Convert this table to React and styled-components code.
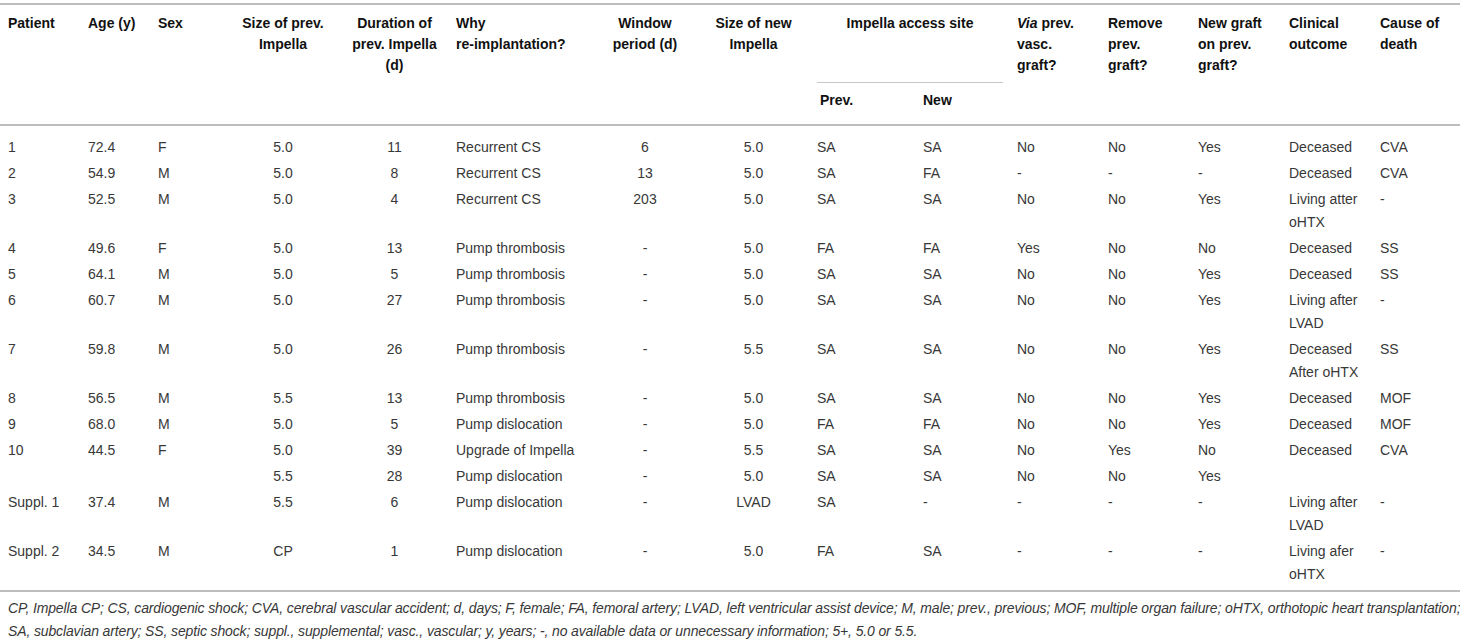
import React from "react";
import styled, { createGlobalStyle } from "styled-components";

const GlobalStyle = createGlobalStyle`
  body {
    margin: 0;
    background: #fff;
    font-family: "Liberation Sans", Arial, Helvetica, sans-serif;
    color: #333;
  }
`;

const widths = [83, 70, 75, 110, 113, 144, 100, 117, 106, 94, 91, 90, 91, 91, 85];
const centered = [3, 4, 6, 7];

const rows = [
  ["1", "72.4", "F", "5.0", "11", "Recurrent CS", "6", "5.0", "SA", "SA", "No", "No", "Yes", "Deceased", "CVA"],
  ["2", "54.9", "M", "5.0", "8", "Recurrent CS", "13", "5.0", "SA", "FA", "-", "-", "-", "Deceased", "CVA"],
  ["3", "52.5", "M", "5.0", "4", "Recurrent CS", "203", "5.0", "SA", "SA", "No", "No", "Yes", ["Living atter", "oHTX"], "-"],
  ["4", "49.6", "F", "5.0", "13", "Pump thrombosis", "-", "5.0", "FA", "FA", "Yes", "No", "No", "Deceased", "SS"],
  ["5", "64.1", "M", "5.0", "5", "Pump thrombosis", "-", "5.0", "SA", "SA", "No", "No", "Yes", "Deceased", "SS"],
  ["6", "60.7", "M", "5.0", "27", "Pump thrombosis", "-", "5.0", "SA", "SA", "No", "No", "Yes", ["Living after", "LVAD"], "-"],
  ["7", "59.8", "M", "5.0", "26", "Pump thrombosis", "-", "5.5", "SA", "SA", "No", "No", "Yes", ["Deceased", "After oHTX"], "SS"],
  ["8", "56.5", "M", "5.5", "13", "Pump thrombosis", "-", "5.0", "SA", "SA", "No", "No", "Yes", "Deceased", "MOF"],
  ["9", "68.0", "M", "5.0", "5", "Pump dislocation", "-", "5.0", "FA", "FA", "No", "No", "Yes", "Deceased", "MOF"],
  ["10", "44.5", "F", "5.0", "39", "Upgrade of Impella", "-", "5.5", "SA", "SA", "No", "Yes", "No", "Deceased", "CVA"],
  ["", "", "", "5.5", "28", "Pump dislocation", "-", "5.0", "SA", "SA", "No", "No", "Yes", "", ""],
  ["Suppl. 1", "37.4", "M", "5.5", "6", "Pump dislocation", "-", "LVAD", "SA", "-", "-", "-", "-", ["Living after", "LVAD"], "-"],
  ["Suppl. 2", "34.5", "M", "CP", "1", "Pump dislocation", "-", "5.0", "FA", "SA", "-", "-", "-", ["Living afer", "oHTX"], "-"],
];

const Page = styled.div`
  width: 1460px;
  padding-top: 3px;
`;

const Table = styled.table`
  width: 1460px;
  border-collapse: collapse;
  table-layout: fixed;
  border-top: 2px solid #bdbdbd;
  border-bottom: 2px solid #bdbdbd;
`;

const HeadRow = styled.tr`
  &:last-child th {
    border-bottom: 2px solid #bdbdbd;
  }
`;

const HeadCell = styled.th`
  padding: ${(p) => (p.$sub ? "7px 5px 0" : "8px 5px 0")};
  height: ${(p) => (p.$sub ? "34px" : "auto")};
  vertical-align: top;
  text-align: ${(p) => (p.$center ? "center" : "left")};
  font-size: 14px;
  font-weight: bold;
  line-height: 21px;
  color: #111;
  white-space: nowrap;
  border-bottom: ${(p) => (p.$span ? "2px solid #bdbdbd" : "none")};
  &:first-child {
    padding-left: 8px;
  }
`;

const GroupCell = styled.th`
  padding: 8px 9px 0 5px;
  vertical-align: top;
`;

const GroupLabel = styled.div`
  height: 69px;
  border-bottom: 1px solid #c8c8c8;
  text-align: center;
  font-size: 14px;
  font-weight: bold;
  line-height: 21px;
  color: #111;
  white-space: nowrap;
`;

const BodyRow = styled.tr`
  &:first-child td {
    padding-top: 10px;
  }
  &:last-child td {
    padding-bottom: 4px;
  }
`;

const Cell = styled.td`
  padding: 1px 5px 2px;
  vertical-align: top;
  text-align: ${(p) => (p.$center ? "center" : "left")};
  font-size: 14px;
  line-height: 23px;
  color: #383838;
  white-space: nowrap;
  &:first-child {
    padding-left: 8px;
  }
`;

const Footnote = styled.p`
  margin: 0;
  padding: 5px 8px 0;
  font-size: 14px;
  line-height: 23px;
  font-style: italic;
  color: #383838;
  letter-spacing: -0.13px;
  white-space: nowrap;
`;

const lines = (v) =>
  Array.isArray(v)
    ? v.map((t, i) => (
        <React.Fragment key={i}>
          {i > 0 && <br />}
          {t}
        </React.Fragment>
      ))
    : v;

export default function App() {
  return (
    <Page>
      <GlobalStyle />
      <Table>
        <colgroup>
          {widths.map((w, i) => (
            <col key={i} style={{ width: w }} />
          ))}
        </colgroup>
        <thead>
          <HeadRow>
            <HeadCell rowSpan={2} $span>Patient</HeadCell>
            <HeadCell rowSpan={2} $span>Age (y)</HeadCell>
            <HeadCell rowSpan={2} $span>Sex</HeadCell>
            <HeadCell rowSpan={2} $span $center>Size of prev.<br />Impella</HeadCell>
            <HeadCell rowSpan={2} $span $center>Duration of<br />prev. Impella<br />(d)</HeadCell>
            <HeadCell rowSpan={2} $span>Why<br />re-implantation?</HeadCell>
            <HeadCell rowSpan={2} $span $center>Window<br />period (d)</HeadCell>
            <HeadCell rowSpan={2} $span $center>Size of new<br />Impella</HeadCell>
            <GroupCell colSpan={2}>
              <GroupLabel>Impella access site</GroupLabel>
            </GroupCell>
            <HeadCell rowSpan={2} $span><i>Via</i> prev.<br />vasc.<br />graft?</HeadCell>
            <HeadCell rowSpan={2} $span>Remove<br />prev.<br />graft?</HeadCell>
            <HeadCell rowSpan={2} $span>New graft<br />on prev.<br />graft?</HeadCell>
            <HeadCell rowSpan={2} $span>Clinical<br />outcome</HeadCell>
            <HeadCell rowSpan={2} $span>Cause of<br />death</HeadCell>
          </HeadRow>
          <HeadRow>
            <HeadCell $sub>Prev.</HeadCell>
            <HeadCell $sub>New</HeadCell>
          </HeadRow>
        </thead>
        <tbody>
          {rows.map((r, i) => (
            <BodyRow key={i}>
              {r.map((v, j) => (
                <Cell key={j} $center={centered.includes(j)}>
                  {lines(v)}
                </Cell>
              ))}
            </BodyRow>
          ))}
        </tbody>
      </Table>
      <Footnote>
        CP, Impella CP; CS, cardiogenic shock; CVA, cerebral vascular accident; d, days; F, female; FA, femoral artery; LVAD, left ventricular assist device; M, male; prev., previous; MOF, multiple organ failure; oHTX, orthotopic heart transplantation;
        <br />
        SA, subclavian artery; SS, septic shock; suppl., supplemental; vasc., vascular; y, years; -, no available data or unnecessary information; 5+, 5.0 or 5.5.
      </Footnote>
    </Page>
  );
}
